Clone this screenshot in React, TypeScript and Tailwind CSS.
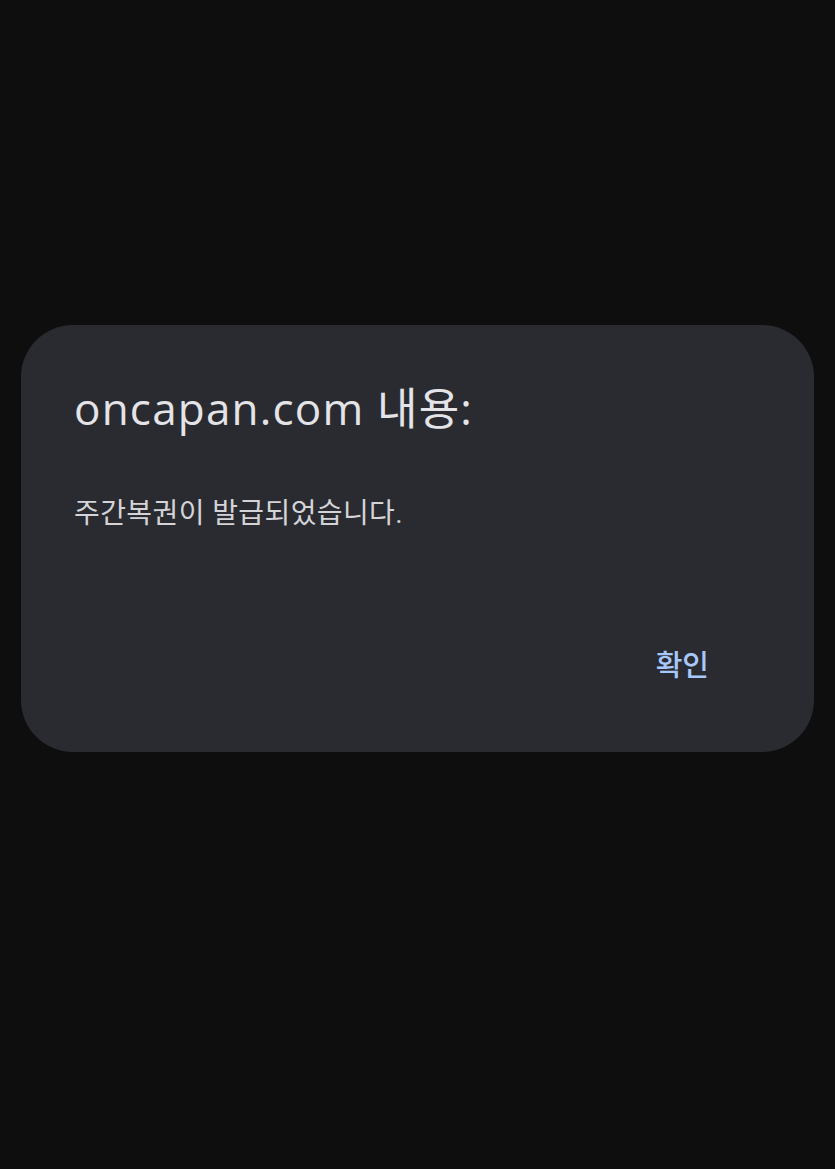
import React from 'react';

export default function App() {
    return (
        <div className="min-h-[1169px] w-full bg-[#0e0e0f] flex flex-col pt-[325px] px-[21px] font-['Roboto','Noto_Sans_CJK_KR',sans-serif]">
            <div className="w-full h-[427px] bg-[#2a2b30] rounded-[52px] flex flex-col pl-[53px] pr-[105px] pt-[55px]">
                <h1 className="text-[44px] leading-[56px] text-[#e4e4e8] font-normal tracking-[1.2px] font-['Open_Sans','Noto_Sans_CJK_KR',sans-serif]">
                    oncapan.com 내용:
                </h1>
                <p className="mt-[59px] text-[28px] leading-[38px] tracking-[0.4px] text-[#d4d4d8]">
                    주간복권이 발급되었습니다.
                </p>
                <div className="flex justify-end mt-[113px]">
                    <button className="text-[29px] leading-[40px] font-medium text-[#a8c7fa]">
                        확인
                    </button>
                </div>
            </div>
        </div>
    );
}
